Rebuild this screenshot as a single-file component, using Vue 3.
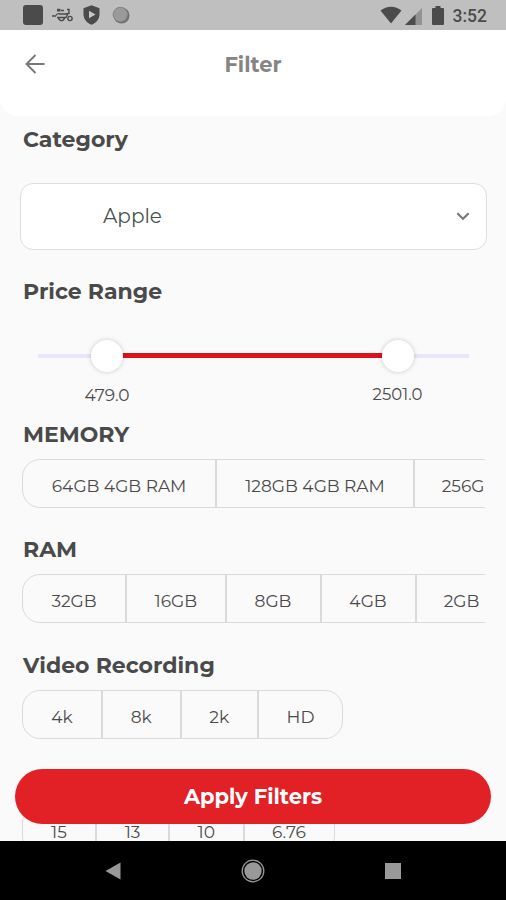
<template>
  <div class="screen">
    <div class="status-bar">
      <div class="status-left">
        <svg width="20" height="20" viewBox="0 0 20 20">
          <rect width="20" height="20" rx="3" fill="#4b4b4b" />
        </svg>
        <svg class="scooter" width="21" height="14" viewBox="0 0 21 14" fill="none" stroke="#4b4b4b" stroke-width="1.4">
          <path d="M0 8h4M15 1.500h2v4.500" />
          <path d="M5 .8h3.500v2.700H5z" fill="#4b4b4b" stroke="none" />
          <path d="M9 2.500h3M4 7.500c1-2 3-2 4-1.500h5l4-.5M5 9.500h9l2-4M6.500 10c1 3.500 5 3.500 6 0" />
          <circle cx="18" cy="10.500" r="2.100" />
        </svg>
        <svg width="17" height="20" viewBox="0 0 17 20">
          <path d="M8.500.3l8 3V9c0 5-3.200 9-8 10.700C3.700 18 .5 14 .5 9V3.300z" fill="#4b4b4b" />
          <path d="M6 5.800v7.400l6.500-3.700z" fill="#c8c8c8" />
        </svg>
        <svg class="ball" width="18" height="18" viewBox="0 0 18 18">
          <circle cx="9.500" cy="9.500" r="8" fill="#707070" />
          <circle cx="8.300" cy="8.500" r="7.200" fill="#9a9a9a" stroke="#858585" />
        </svg>
      </div>
      <div class="status-right">
        <svg width="22" height="18" viewBox="0 0 22 18">
          <path d="M.5 4.500c6-5.100 15-5.100 21 0L11 17.500z" fill="#4b4b4b" />
        </svg>
        <svg class="signal" width="17" height="17" viewBox="0 0 17 17">
          <path d="M17 0v17H0z" fill="#929292" />
          <path d="M10.500 6.500V17H0z" fill="#4b4b4b" />
        </svg>
        <svg width="12" height="19" viewBox="0 0 12 19">
          <path d="M3.500 0h5v2H11q1 0 1 1v15q0 1-1 1H1q-1 0-1-1V3q0-1 1-1h2.500z" fill="#4b4b4b" />
        </svg>
        <span class="clock">3:52</span>
      </div>
    </div>

    <header class="header">
      <svg width="20" height="20" viewBox="0 0 20 20" fill="none" stroke="#777" stroke-width="1.900">
        <path d="M19.500 10H1.500M10.500 1l-9 9 9 9" />
      </svg>
      <h1>Filter</h1>
    </header>

    <main class="content">
      <h2>Category</h2>
      <div class="select">
        <span>Apple</span>
        <svg width="14" height="9" viewBox="0 0 14 9" fill="none" stroke="#777" stroke-width="2.100">
          <path d="M1.300 1.300L7 6.800l5.700-5.500" />
        </svg>
      </div>

      <h2 class="price-title">Price Range</h2>
      <div class="slider">
        <div class="track">
          <div class="range" :style="{ left: percent(low) + '%', right: 100 - percent(high) + '%' }"></div>
          <div v-for="p in [low, high]" :key="p.label" class="thumb" :style="{ left: percent(p) + '%' }">
            <span :class="{ upper: p === high }">{{ p.label }}</span>
          </div>
        </div>
      </div>

      <section v-for="(group, i) in groups" :key="i" class="group">
        <h2>{{ group.title }}</h2>
        <div class="scroller">
          <div class="chips">
            <div v-for="o in group.options" :key="o.label" class="chip" :style="{ width: o.width + 'px' }">
              {{ o.label }}
            </div>
          </div>
        </div>
      </section>
    </main>

    <button class="apply">Apply Filters</button>

    <nav class="nav-bar">
      <svg width="16" height="18" viewBox="0 0 16 18"><path d="M15.500.5v17L.5 9z" fill="#999" /></svg>
      <svg width="24" height="24" viewBox="0 0 24 24">
        <circle cx="12" cy="12" r="10.800" fill="none" stroke="#999" stroke-width="1.300" />
        <circle cx="12" cy="12" r="8.700" fill="#999" />
      </svg>
      <svg width="16" height="16" viewBox="0 0 16 16"><rect width="16" height="16" fill="#999" /></svg>
    </nav>
  </div>
</template>

<script setup>
import { ref } from 'vue'

const low = { at: 69, label: '479.0' }
const high = { at: 359.5, label: '2501.0' }

// thumb position along the 431px track
const percent = (p) => (p.at / 431) * 100

const groups = ref([
  {
    title: 'MEMORY',
    options: [
      { label: '64GB 4GB RAM', width: 192 },
      { label: '128GB 4GB RAM', width: 198 },
      { label: '256GB 4GB RAM', width: 198 }
    ]
  },
  {
    title: 'RAM',
    options: [
      { label: '32GB', width: 102 },
      { label: '16GB', width: 99.5 },
      { label: '8GB', width: 95 },
      { label: '4GB', width: 95 },
      { label: '2GB', width: 92 }
    ]
  },
  {
    title: 'Video Recording',
    options: [
      { label: '4k', width: 78 },
      { label: '8k', width: 78.5 },
      { label: '2k', width: 77.5 },
      { label: 'HD', width: 85 }
    ]
  },
  {
    title: '',
    options: [
      { label: '15', width: 72 },
      { label: '13', width: 73 },
      { label: '10', width: 74.5 },
      { label: '6.76', width: 91 }
    ]
  }
])
</script>

<style>
body {
  margin: 0;
  background: #fafafa;
}
</style>

<style scoped>
.screen {
  position: relative;
  display: flex;
  flex-direction: column;
  width: 506px;
  height: 900px;
  overflow: hidden;
  background: #fafafa;
  color: #4a4a4a;
  font-family: Montserrat, Inter, sans-serif;
}

.status-bar {
  display: flex;
  justify-content: space-between;
  flex: none;
  box-sizing: border-box;
  height: 30px;
  padding: 0 19px 0 23px;
  background: #bfbfbf;
}

.status-left,
.status-right {
  display: flex;
  align-items: center;
}

.scooter {
  margin: 0 10px 0 9px;
}

.ball {
  margin-left: 12px;
}

.signal {
  margin: 2px 10px 0 3px;
}

.clock {
  margin: 2px 0 0 9px;
  color: #4b4b4b;
  font: 500 17.5px/24px Roboto, sans-serif;
}

.header {
  display: flex;
  align-items: center;
  flex: none;
  box-sizing: border-box;
  height: 86px;
  padding: 0 25px 18px;
  background: #fff;
  border-radius: 0 0 18px 18px;
}

.header h1 {
  flex: 1;
  margin: 0 20px 0 0;
  color: #858585;
  font-size: 21px;
  font-weight: 700;
  text-align: center;
}

.content {
  flex: 1;
  min-height: 0;
  overflow: hidden;
  padding: 10px 19px 0 20px;
}

h2 {
  margin: 0 0 0 3px;
  height: 28px;
  font-size: 22px;
  font-weight: 700;
  line-height: 28px;
  white-space: nowrap;
}

.select {
  display: flex;
  align-items: center;
  justify-content: space-between;
  box-sizing: border-box;
  height: 67px;
  margin-top: 28.5px;
  padding: 0 16px 0 82px;
  border: 1px solid #dedede;
  border-radius: 13px;
  background: #fff;
  color: #46514f;
  font-size: 20px;
  font-weight: 400;
}

.price-title {
  margin-top: 28.5px;
}

.slider {
  padding: 48px 18px 0;
  height: 66.6px;
}

.track {
  position: relative;
  height: 4px;
  background: #e8e6fa;
}

.range {
  position: absolute;
  top: -1px;
  height: 5px;
  background: #d9141a;
}

.thumb {
  position: absolute;
  top: -14px;
  width: 32px;
  height: 32px;
  margin-left: -16px;
  border-radius: 50%;
  background: #fff;
  box-shadow: 0 0 5px rgba(0, 0, 0, 0.2);
}

.thumb span {
  position: absolute;
  top: 45px;
  left: 50%;
  transform: translateX(-50%);
  font-size: 17px;
  line-height: 20px;
}

.thumb .upper {
  top: 44px;
  font-size: 16.5px;
}

.group {
  height: 115.5px;
}

.scroller {
  overflow: hidden;
  margin: 10px 2px 0;
}

.chips {
  display: flex;
  box-sizing: border-box;
  width: max-content;
  height: 49px;
  border: 1px solid #dadada;
  border-radius: 18px;
}

.chip {
  display: flex;
  align-items: center;
  justify-content: center;
  box-sizing: border-box;
  padding-top: 5px;
  font-size: 17px;
  white-space: nowrap;
}

.chip + .chip {
  border-left: 2px solid #dadada;
}

.apply {
  position: absolute;
  top: 769px;
  left: 15px;
  width: 476px;
  height: 55px;
  border: 0;
  border-radius: 28px;
  background: #e12126;
  color: #fff;
  font-family: inherit;
  font-size: 21px;
  font-weight: 700;
}

.nav-bar {
  display: flex;
  align-items: center;
  justify-content: space-between;
  flex: none;
  box-sizing: border-box;
  height: 59px;
  padding: 0 105px;
  background: #000;
}
</style>
